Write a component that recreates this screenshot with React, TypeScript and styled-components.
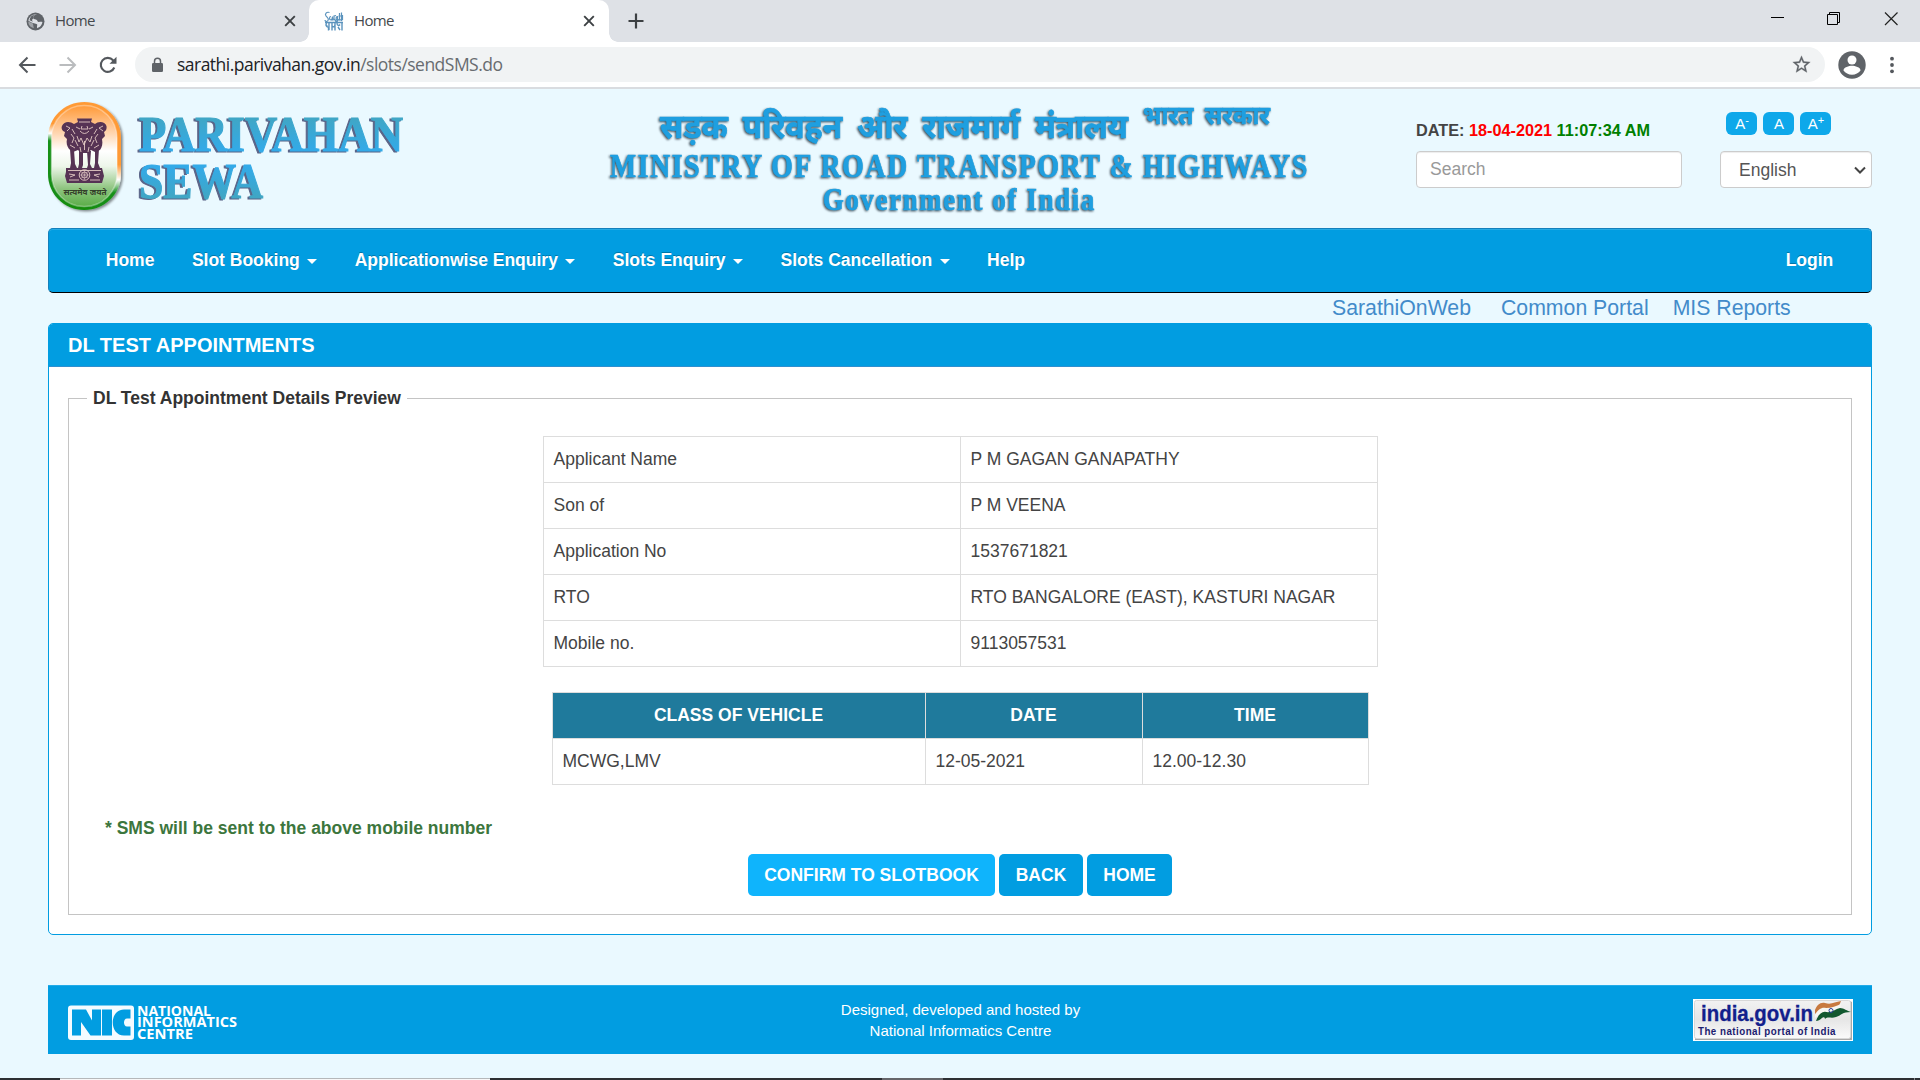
import React from "react";
import styled, { createGlobalStyle } from "styled-components";

const blue = "#019de1";

const GlobalStyle = createGlobalStyle`
  * { box-sizing: border-box; }
  body { margin: 0; background: #eaf9ff; font-family: "Liberation Sans", Arial, sans-serif; color: #444; }
`;

const Screen = styled.div`
  width: 1920px;
  height: 1080px;
  overflow: hidden;
  display: flex;
  flex-direction: column;
`;

/* ---------- browser chrome ---------- */
const TabStrip = styled.div`
  height: 42px;
  flex: none;
  background: #dee1e6;
  display: flex;
  font: 15px "Open Sans", sans-serif;
  letter-spacing: -0.65px;
  color: #45494d;
`;

const Tab = styled.div<{ $active?: boolean }>`
  width: ${(p) => (p.$active ? 300 : 309)}px;
  height: 42px;
  padding: 0 ${(p) => (p.$active ? 14 : 13)}px 0 ${(p) => (p.$active ? 15 : 26)}px;
  display: flex;
  align-items: center;
  background: ${(p) => (p.$active ? "#fff" : "transparent")};
  border-radius: 10px 10px 0 0;
  position: relative;
  &::before, &::after {
    content: "";
    display: ${(p) => (p.$active ? "block" : "none")};
    position: absolute;
    bottom: 0;
    width: 9px;
    height: 9px;
  }
  &::before { left: -9px; background: radial-gradient(circle at 0 0, transparent 8.5px, #fff 9px); }
  &::after { right: -9px; background: radial-gradient(circle at 100% 0, transparent 8.5px, #fff 9px); }
`;

const TabTitle = styled.span`
  flex: 1;
  padding-left: 10px;
  line-height: 20px;
  margin-top: -3px;
`;

const NewTab = styled.div`
  display: flex;
  align-items: center;
  padding-left: 19px;
  flex: 1;
`;

const WindowButtons = styled.div`
  display: flex;
  gap: 43px;
  padding: 12px 21px 0 0;
`;

const Toolbar = styled.div`
  height: 47px;
  flex: none;
  background: #fff;
  border-bottom: 2px solid #d9dce0;
  display: flex;
  align-items: center;
  padding-left: 18px;
`;

const NavIcons = styled.div`
  width: 117px;
  display: flex;
  gap: 20px;
`;

const Omnibox = styled.div`
  width: 1690px;
  height: 35px;
  border-radius: 18px;
  background: #f1f3f4;
  display: flex;
  align-items: center;
  padding: 0 13px 0 16px;
  font: 17.5px "Open Sans", sans-serif;
  letter-spacing: -0.52px;
`;

const Url = styled.span`
  flex: 1;
  padding-left: 13px;
  color: #202124;
  line-height: 24px;
  margin-top: -2px;
  span { color: #686c70; }
`;

const Profile = styled.div`
  display: flex;
  align-items: center;
  gap: 22px;
  padding-left: 13px;
`;

/* ---------- page header ---------- */
const Header = styled.header`
  height: 139px;
  flex: none;
  display: flex;
  padding-left: 40px;
`;

const Ministry = styled.svg`
  margin-left: 180px;
`;

const SearchColumn = styled.div`
  width: 266px;
  margin-left: 96px;
  padding-top: 31px;
`;

const DateLine = styled.div`
  font-size: 16.25px;
  font-weight: bold;
  line-height: 20px;
  margin-bottom: 11px;
  white-space: nowrap;
  color: #444;
`;

const DateValue = styled.span` color: #f00; `;
const TimeValue = styled.span` color: #008000; `;

const Control = styled.div`
  height: 37px;
  border: 1px solid #ccc;
  border-radius: 4px;
  background: #fff;
  box-shadow: inset 0 1px 1px rgba(0, 0, 0, 0.075);
  font-size: 17.5px;
  line-height: 35px;
`;

const SearchBox = styled(Control)`
  padding-left: 13px;
  color: #999;
`;

const LanguageBox = styled(Control)`
  padding: 1px 5px 0 18px;
  line-height: 35px;
  display: flex;
  align-items: center;
  justify-content: space-between;
  color: #555;
`;

const LanguageColumn = styled.div`
  width: 152px;
  margin-left: 38px;
  padding-top: 23px;
`;

const FontButtons = styled.div`
  display: flex;
  gap: 6px;
  padding-left: 6px;
  margin-bottom: 16px;
`;

const FontButton = styled.div`
  width: 31px;
  height: 23px;
  border-radius: 6px;
  background: #0ea8ea;
  color: #fff;
  font-size: 15px;
  line-height: 23px;
  text-align: center;
  padding-left: 1px;
  sup { font-size: 11px; line-height: 0; vertical-align: 5px; }
`;

/* ---------- navigation ---------- */
const NavBar = styled.nav`
  height: 65px;
  flex: none;
  margin: 0 48px;
  padding: 0 19px 0 38px;
  border: 1px solid #1580bb;
  border-bottom-color: #000;
  border-radius: 5px;
  background: ${blue};
  box-shadow: inset 0 1px 0 rgba(255, 255, 255, 0.15);
  display: flex;
  align-items: center;
  font-size: 17.5px;
  font-weight: bold;
  color: #fff;
  text-shadow: 0 -1px 0 rgba(0, 0, 0, 0.25);
`;

const NavItem = styled.span<{ $right?: boolean }>`
  padding: 0 18.75px;
  line-height: 25px;
  margin-left: ${(p) => (p.$right ? "auto" : "0")};
  white-space: nowrap;
`;

const Caret = styled.i`
  display: inline-block;
  margin-left: 7.4px;
  vertical-align: middle;
  border-top: 5px solid #fff;
  border-left: 5px solid transparent;
  border-right: 5px solid transparent;
`;

const LinkRow = styled.div`
  height: 30px;
  flex: none;
  display: flex;
  padding-left: 1332px;
  font-size: 21.25px;
  line-height: 31px;
  color: #428bca;
  white-space: nowrap;
`;

const PortalLink = styled.a<{ $gap: number }>`
  margin-right: ${(p) => p.$gap}px;
`;

/* ---------- panel ---------- */
const Panel = styled.section`
  height: 612px;
  flex: none;
  margin: 0 48px;
  border: 1px solid ${blue};
  border-radius: 5px;
  background: #fff;
  overflow: hidden;
`;

const PanelTitle = styled.h1`
  margin: 0;
  height: 43px;
  padding-left: 19px;
  background: ${blue};
  border-bottom: 1px solid #2f8fcf;
  color: #fff;
  font-size: 20px;
  line-height: 42px;
`;

const Details = styled.fieldset`
  margin: 20px 19px 0;
  padding: 0;
  height: 528px;
  border: 1px solid #c4c4c4;
`;

const Legend = styled.legend`
  margin-left: 18px;
  padding: 0 6px;
  font-size: 17.5px;
  font-weight: bold;
  line-height: 23px;
  color: #333;
`;

const Table = styled.table<{ $width: number; $top: number }>`
  width: ${(p) => p.$width}px;
  margin: ${(p) => p.$top}px auto 0;
  border-collapse: collapse;
  table-layout: fixed;
  font-size: 17.5px;
  color: #444;
`;

const Cell = styled.td`
  height: 46px;
  padding: 0 10px 1px;
  border: 1px solid #ddd;
`;

const HeadCell = styled.th<{ $width: number }>`
  width: ${(p) => p.$width}px;
  height: 46px;
  padding: 0;
  border: 1px solid #ddd;
  background: #1f7a9c;
  color: #fff;
`;

const Notice = styled.p`
  margin: 31px 0 13px 36px;
  font-size: 17.5px;
  font-weight: bold;
  line-height: 25px;
  color: #3c763d;
`;

const Actions = styled.div`
  display: flex;
  justify-content: center;
  gap: 4px;
`;

const Action = styled.button<{ $width: number; $bright?: boolean }>`
  width: ${(p) => p.$width}px;
  height: 42px;
  padding: 0;
  border: 0;
  border-radius: 5px;
  background: ${(p) => (p.$bright ? "#0fb4fc" : blue)};
  color: #fff;
  font: bold 17.5px "Liberation Sans", Arial, sans-serif;
  white-space: nowrap;
`;

/* ---------- footer ---------- */
const Footer = styled.footer`
  height: 69px;
  flex: none;
  margin: 50px 48px 24px;
  padding: 0 19px 0 20px;
  background: ${blue};
  border-top: 1px solid #22abe8;
  display: flex;
  justify-content: space-between;
  color: #fff;
`;

const Credit = styled.div`
  font-size: 15px;
  line-height: 21px;
  padding-top: 13px;
  text-align: center;
`;

const FooterSide = styled.div<{ $right?: boolean; $top: number }>`
  width: 180px;
  padding-top: ${(p) => p.$top}px;
  display: flex;
  justify-content: ${(p) => (p.$right ? "flex-end" : "flex-start")};
  align-items: flex-start;
`;

const Taskbar = styled.div`
  height: 2px;
  flex: none;
  display: flex;
  background: #2d2f33;
`;

const TaskSegment = styled.div<{ $left: number; $width: number; $color: string; $edge?: string }>`
  margin-left: ${(p) => p.$left}px;
  width: ${(p) => p.$width}px;
  background: ${(p) => p.$color};
  border-top: ${(p) => (p.$edge ? `1px solid ${p.$edge}` : "0")};
`;

/* ---------- drawings ---------- */
const CloseIcon = () => (
  <svg width="12" height="12" viewBox="0 0 12 12" stroke="#3c4043" strokeWidth="1.9">
    <path d="M1.200 1.200L10.800 10.800M10.800 1.200L1.200 10.800" />
  </svg>
);

const GlobeIcon = () => (
  <svg width="19" height="19" viewBox="0 0 19 19">
    <circle cx="9.500" cy="9.500" r="9" fill="#5f6368" />
    <path d="M11 2.300C8.600 2.500 7 4 7.200 6c.2 1.400 2.600 1.200 3.600 2 .8.700.4 1.700 1.700 1.900 1.300.1 2.200-.4 3.900.1-.3 2.800-2.500 5.600-5.400 6.200.3-1.300-.3-1.900.2-2.800.3-1-.3-1.500-1.500-1.700C7.500 11.400 4.800 10.400 2.400 8.800 2.800 5 6.500 1.900 11 2.300z" fill="#dee1e6" />
    <path d="M3.500 8.200C4 5 6 3.200 8.500 2.600 7.200 4 7 5.500 7.600 6.500 6 7 5.500 8.500 7 9.800z" fill="#5f6368" />
    <path d="M2.300 9.600l4.600 1.800.9 4.900C4.500 15.600 2.200 13 2.300 9.600z" fill="#dee1e6" opacity="0.500" />
  </svg>
);

const Favicon = () => (
  <svg width="20" height="20" viewBox="0 0 20 20" fill="none" stroke="#5b93bd" strokeWidth="1.200">
    <path d="M5.500 1.500C2.500.5.500 3 2 5s3.500 2.500 2 4.500-3 .5-3-.5M7 5.500c-2 0-2 3.500 0 3.500 1 0 1.500-3.500 1.500-3.500v4M10 9.500V5l2-.5M13 5.500c-1.500 1-1 4 .5 3.500V5M15.500 2v7.500M17.500 1.500v8M14.500 5h4M18.500 4v5" />
    <path d="M1 11.500h18M2.500 11.500c-1 3 0 5 2 4.500v3.500M5 12v7M8 11v8.500M8 15c2 2 3 0 3-2M11 12v7.500M13 12c0 3 2 3 3 1.500M14 16l2 3M18 11v8.500M1.500 13.500l2 2M7 9c3-2 5 0 5 2M13 11c0-3 4-3 5-1" strokeWidth="1.400" />
  </svg>
);

const LANGUAGE = "English";

const Emblem = () => (
  <g>
    <defs>
      <linearGradient id="capsule" x1="0" y1="0" x2="0" y2="1">
        <stop offset="0" stopColor="#ff9a38" />
        <stop offset="0.220" stopColor="#ffc998" />
        <stop offset="0.450" stopColor="#fff" />
        <stop offset="0.600" stopColor="#edf6ea" />
        <stop offset="0.820" stopColor="#8fc580" />
        <stop offset="1" stopColor="#5aad48" />
      </linearGradient>
      <linearGradient id="rimLeft" x1="0" y1="0" x2="0" y2="1">
        <stop offset="0" stopColor="#ff9a36" />
        <stop offset="0.200" stopColor="#ff9a36" />
        <stop offset="0.290" stopColor="#fff" />
        <stop offset="0.360" stopColor="#16911a" />
        <stop offset="1" stopColor="#128c10" />
      </linearGradient>
      <linearGradient id="rimRight" x1="0" y1="0" x2="0" y2="1">
        <stop offset="0" stopColor="#ff9a36" />
        <stop offset="0.580" stopColor="#ff9a36" />
        <stop offset="0.720" stopColor="#fff" />
        <stop offset="0.840" stopColor="#16911a" />
        <stop offset="1" stopColor="#128c10" />
      </linearGradient>
      <filter id="soft" x="-20%" y="-20%" width="150%" height="150%">
        <feDropShadow dx="1.800" dy="1.500" stdDeviation="1.200" floodColor="#000" floodOpacity="0.450" />
      </filter>
    </defs>
    <g filter="url(#soft)">
      <path d="M84.500 102C64 102 48 118 48 138v36c0 20 16 36 36.500 36z" fill="url(#rimLeft)" />
      <path d="M84 102c20.500 0 37 16 37 36v36c0 20-16.500 36-37 36z" fill="url(#rimRight)" />
    </g>
    <rect x="51.500" y="105.500" width="65.500" height="101" rx="32.500" fill="url(#capsule)" stroke="#fff" strokeOpacity="0.350" strokeWidth="1.500" />
    <g fill="#563354">
      <path d="M77 118.500h15l-1 3.500 4 2c3-3 10-3 11.500 2 .5 3-.5 5-2.500 6l1 4-3 3c1 5 0 8-2 11l-5 2-4-2-3 3h-7l-3-3-5 2-4-3c-2-3-3-6-2-10l-3-3 1-4c-3-1-4-4-3-6 2-5 8-5 12-2l4-2z" />
      <path d="M70 149l4 1 1 14 2 4h-7l1-5zM79 151h4v14l-1 3h-4l1-4zM87 151h4l-1 13 2 4h-5l1-3zM95 150l4-1-1 14 2 5h-6l1-5z" />
      <path d="M66 168h36l1 4 1 4-2 7H67l-2-7 1-4z" />
    </g>
    <g stroke="#e3c9c4" fill="none" strokeWidth="0.900">
      <path d="M79 122h11M76 127l4 2m13-2l-4 2M80 131q4.500 5 9 0M82 126l-1 3h7l-1-3M66 126l4 2-3 3M103 126l-4 2 4 3M71 134l3 4-2 5M98 134l-3 4 2 5M77 136l2 6 2-4 3 7 3-7 3 4 2-6M70 145l5 3M99 145l-5 3M80 147l1 5M89 147l-1 5M84.500 141v9M72 129l3 5M97 129l-3 5M75 140l3 6M94 140l-3 6" />
      <path d="M68 170.500h33M69 180h10M90 180h10M69 174l6 1-5 2M100 174l-6 1 5 2" />
      <circle cx="84.500" cy="175" r="5.300" />
      <circle cx="84.500" cy="175" r="3" />
      <path d="M79.500 175h10M84.500 170v10M81 171.500l7 7M88 171.500l-7 7" strokeWidth="0.500" />
    </g>
    <text x="63.500" y="195" textLength="43" lengthAdjust="spacingAndGlyphs" fontFamily='"Noto Sans", sans-serif' fontSize="8.500" fontWeight="bold" fill="#34402a">सत्यमेव जयते</text>
  </g>
);

const Caption = ({ children, fill, shadow }: { children: React.ReactNode; fill: string; shadow: string }) => (
  <g fill={fill} stroke={fill} strokeWidth="0.700" style={{ filter: shadow }}>{children}</g>
);

const serif = '"Liberation Serif", "Times New Roman", serif';
const hindi = '"Noto Sans", "Noto Sans Devanagari", sans-serif';

const PORTAL_MENU: [string, boolean][] = [
  ["Home", false],
  ["Slot Booking", true],
  ["Applicationwise Enquiry", true],
  ["Slots Enquiry", true],
  ["Slots Cancellation", true],
  ["Help", false],
];

const APPLICANT: [string, string][] = [
  ["Applicant Name", "P M GAGAN GANAPATHY"],
  ["Son of", "P M VEENA"],
  ["Application No", "1537671821"],
  ["RTO", "RTO BANGALORE (EAST), KASTURI NAGAR"],
  ["Mobile no.", "9113057531"],
];

export default function App() {
  return (
    <Screen>
      <GlobalStyle />
      <TabStrip>
        <Tab>
          <GlobeIcon />
          <TabTitle>Home</TabTitle>
          <CloseIcon />
        </Tab>
        <Tab $active>
          <Favicon />
          <TabTitle>Home</TabTitle>
          <CloseIcon />
        </Tab>
        <NewTab>
          <svg width="16" height="16" viewBox="0 0 16 16" stroke="#3c4043" strokeWidth="2.200">
            <path d="M8 .5v15M.5 8h15" />
          </svg>
        </NewTab>
        <WindowButtons>
          <svg width="13" height="14" viewBox="0 0 13 14"><path d="M0 5.500h13" stroke="#000" /></svg>
          <svg width="14" height="14" viewBox="0 0 14 14" fill="none" stroke="#000">
            <path d="M.5 2.500h10v10H.500zM2.500 2.500v-2h10v10h-2" />
          </svg>
          <svg width="15" height="14" viewBox="0 0 15 14"><path d="M1 .5l12.500 12.500M13.500.5L1 13" stroke="#222" strokeWidth="1.200" /></svg>
        </WindowButtons>
      </TabStrip>
      <Toolbar>
        <NavIcons>
          <svg width="20" height="20" viewBox="0 0 20 20" fill="none" stroke="#54585d" strokeWidth="2">
            <path d="M17.500 10H2.500M9.500 2.500L2 10l7.500 7.500" />
          </svg>
          <svg width="20" height="20" viewBox="0 0 20 20" fill="none" stroke="#babcbe" strokeWidth="2">
            <path d="M1.500 10H16.500M9.500 2.500L17 10l-7.500 7.500" />
          </svg>
          <svg width="20" height="20" viewBox="0 0 20 20" fill="none" stroke="#54585d" strokeWidth="2.100">
            <path d="M16.300 12.500a7 7 0 1 1-1.200-7.200L17 7.200" />
            <path d="M18.500 1.800v7h-7z" fill="#54585d" stroke="none" />
          </svg>
        </NavIcons>
        <Omnibox>
          <svg width="13" height="16" viewBox="0 0 13 16">
            <rect x="1" y="6" width="11" height="9" rx="1.300" fill="#5f6368" />
            <path d="M3.500 6.500V4.200a3 3 0 0 1 6 0v2.300" fill="none" stroke="#5f6368" strokeWidth="1.500" />
          </svg>
          <Url>sarathi.parivahan.gov.in<span>/slots/sendSMS.do</span></Url>
          <svg width="21" height="21" viewBox="0 0 24 24" fill="#5f6368" stroke="#5f6368" strokeWidth="0.300">
            <path d="M22 9.240l-7.190-.62L12 2 9.190 8.630 2 9.240l5.460 4.730L5.820 21 12 17.270 18.180 21l-1.630-7.030L22 9.240zM12 15.400l-3.760 2.270 1-4.280-3.320-2.880 4.380-.38L12 6.100l1.710 4.040 4.380.38-3.320 2.880 1 4.280L12 15.400z" />
          </svg>
        </Omnibox>
        <Profile>
          <svg width="28" height="28" viewBox="0 0 28 28">
            <circle cx="14" cy="14" r="13.700" fill="#5f6368" />
            <circle cx="14" cy="9" r="4.500" fill="#fff" />
            <path d="M5.500 19.500c0-3.200 5.500-4.700 8.500-4.700s8.500 1.500 8.500 4.700c-1.800 2.700-5 4.200-8.500 4.200s-6.700-1.500-8.500-4.200z" fill="#fff" />
          </svg>
          <svg width="8" height="20" viewBox="0 0 8 20" fill="#54585d">
            <circle cx="4" cy="3.700" r="1.900" /><circle cx="4" cy="10" r="1.900" /><circle cx="4" cy="16.300" r="1.900" />
          </svg>
        </Profile>
      </Toolbar>

      <Header>
        <svg width="380" height="139" viewBox="40 89 380 139">
          <defs>
            <linearGradient id="lineOne" x1="0" y1="0" x2="0" y2="1">
              <stop offset="0.200" stopColor="#40a6c4" />
              <stop offset="0.800" stopColor="#33aae8" />
            </linearGradient>
            <linearGradient id="lineTwo" x1="0" y1="0" x2="0" y2="1">
              <stop offset="0.250" stopColor="#33aae8" />
              <stop offset="0.800" stopColor="#40a6c4" />
            </linearGradient>
          </defs>
          <Emblem />
          <Caption fill="url(#lineOne)" shadow="drop-shadow(-1.500px 1.200px 0.700px #5a6488)">
            <text x="139" y="150.500" textLength="264" lengthAdjust="spacingAndGlyphs" fontFamily={serif} fontWeight="bold" fontSize="51" strokeWidth="1.200">PARIVAHAN</text>
          </Caption>
          <Caption fill="url(#lineTwo)" shadow="drop-shadow(-1.500px 1.200px 0.700px #5a6488)">
            <text x="139" y="198" textLength="124" lengthAdjust="spacingAndGlyphs" fontFamily={serif} fontWeight="bold" fontSize="51" strokeWidth="1.200">SEWA</text>
          </Caption>
        </svg>
        <Ministry width="720" height="139" viewBox="600 89 720 139">
          <Caption fill="#1f9fe0" shadow="drop-shadow(-0.800px 1.500px 0.800px #3a4a55)">
            <text x="660" y="138" textLength="468" lengthAdjust="spacingAndGlyphs" fontFamily={hindi} fontWeight="bold" fontSize="33" wordSpacing="7">सड़क परिवहन और राजमार्ग मंत्रालय</text>
            <text x="1143" y="124" textLength="127" lengthAdjust="spacingAndGlyphs" fontFamily={hindi} fontWeight="bold" fontSize="26" wordSpacing="6">भारत सरकार</text>
            <text x="610" y="177" textLength="699" lengthAdjust="spacingAndGlyphs" fontFamily={serif} fontWeight="bold" fontSize="33" letterSpacing="2">MINISTRY OF ROAD TRANSPORT &amp; HIGHWAYS</text>
            <text x="823" y="209.500" textLength="273" lengthAdjust="spacingAndGlyphs" fontFamily={serif} fontWeight="bold" fontSize="31" letterSpacing="2">Government of India</text>
          </Caption>
        </Ministry>
        <SearchColumn>
          <DateLine>DATE: <DateValue>18-04-2021</DateValue> <TimeValue>11:07:34 AM</TimeValue></DateLine>
          <SearchBox>Search</SearchBox>
        </SearchColumn>
        <LanguageColumn>
          <FontButtons>
            <FontButton>A<sup>-</sup></FontButton>
            <FontButton>A</FontButton>
            <FontButton>A<sup>+</sup></FontButton>
          </FontButtons>
          <LanguageBox>
            {LANGUAGE}
            <svg width="12" height="9" viewBox="0 0 12 9" fill="none" stroke="#444" strokeWidth="2"><path d="M1 1.500l5 5 5-5" /></svg>
          </LanguageBox>
        </LanguageColumn>
      </Header>

      <NavBar>
        {PORTAL_MENU.map(([label, hasMenu]) => (
          <NavItem key={label}>{label}{hasMenu && <Caret />}</NavItem>
        ))}
        <NavItem $right>Login</NavItem>
      </NavBar>
      <LinkRow>
        <PortalLink $gap={30}>SarathiOnWeb</PortalLink>
        <PortalLink $gap={24}>Common Portal</PortalLink>
        <PortalLink $gap={0}>MIS Reports</PortalLink>
      </LinkRow>

      <Panel>
        <PanelTitle>DL TEST APPOINTMENTS</PanelTitle>
        <Details>
          <Legend>DL Test Appointment Details Preview</Legend>
          <Table $width={835} $top={26}>
            <tbody>
              {APPLICANT.map(([label, value]) => (
                <tr key={label}><Cell>{label}</Cell><Cell>{value}</Cell></tr>
              ))}
            </tbody>
          </Table>
          <Table $width={817} $top={25}>
            <thead>
              <tr>
                <HeadCell $width={373}>CLASS OF VEHICLE</HeadCell>
                <HeadCell $width={217}>DATE</HeadCell>
                <HeadCell $width={226}>TIME</HeadCell>
              </tr>
            </thead>
            <tbody>
              <tr><Cell>MCWG,LMV</Cell><Cell>12-05-2021</Cell><Cell>12.00-12.30</Cell></tr>
            </tbody>
          </Table>
          <Notice>* SMS will be sent to the above mobile number</Notice>
          <Actions>
            <Action $width={247} $bright>CONFIRM TO SLOTBOOK</Action>
            <Action $width={84}>BACK</Action>
            <Action $width={85}>HOME</Action>
          </Actions>
        </Details>
      </Panel>

      <Footer>
        <FooterSide $top={18}>
          <svg width="176" height="38" viewBox="0 -1 176 38">
            <rect x="0" y="0.500" width="66" height="34.500" rx="3" fill="#f4fbff" />
            <path d="M4 4.500h14l6 11v-11h9v26H22.500L13 17v13.500H4zM34 4.500h10v26H34zM62.500 4.500v9H59c-4 0-4 8 0 8h3.500v9H56C41 30.500 41 4.500 56 4.500z" fill={blue} />
            <g fill="#fff" fontFamily='"Open Sans", sans-serif' fontWeight="bold" fontSize="13.500">
              <text x="69" y="10.500" textLength="74" lengthAdjust="spacingAndGlyphs">NATIONAL</text>
              <text x="69" y="22.300" textLength="100" lengthAdjust="spacingAndGlyphs">INFORMATICS</text>
              <text x="69" y="34" textLength="56" lengthAdjust="spacingAndGlyphs">CENTRE</text>
            </g>
          </svg>
        </FooterSide>
        <Credit>
          Designed, developed and hosted by<br />National Informatics Centre
        </Credit>
        <FooterSide $right $top={13}>
          <svg width="160" height="42" viewBox="0 0 160 42">
            <defs>
              <linearGradient id="plate" x1="0" y1="0" x2="0" y2="1">
                <stop offset="0" stopColor="#f2f2f2" />
                <stop offset="0.500" stopColor="#e6e6e6" />
                <stop offset="1" stopColor="#fafafa" />
              </linearGradient>
            </defs>
            <rect width="160" height="42" fill="#fff" />
            <path d="M2 41h157V3l-2-1v37H2z" fill="#a8a8a8" />
            <rect x="1.500" y="1.500" width="156" height="38" rx="2" fill="url(#plate)" stroke="#d8d8d8" />
            <text x="8" y="22" textLength="112" lengthAdjust="spacingAndGlyphs" fontFamily='"Liberation Sans", Arial, sans-serif' fontWeight="bold" fontSize="21.500" fill="#12208c" stroke="#12208c" strokeWidth="0.300">india.gov.in</text>
            <text x="5" y="36" textLength="138" lengthAdjust="spacingAndGlyphs" fontFamily='"Liberation Sans", Arial, sans-serif' fontWeight="bold" fontSize="10.300" letterSpacing="0.500" fill="#1c1c70">The national portal of India</text>
            <path d="M122 11c2-5 5-8 10-7 6 2 10-1 16-2l-2 5c-5 1-8 4-12 3-4 0-8 1-12 5z" fill="#c87a40" />
            <path d="M122 16c3-6 7-8 11-7 6 0 10-2 15-4l-1 6c-5 0-8 4-13 4-5-1-9 1-12 4z" fill="#f7f7f2" />
            <path d="M123 22c2-6 6-10 10-9 6 1 9-3 14-4 4 0 7 3 11 4-9 0-9 3-15 5-5 2-8-1-11 2 0-2-2-2-3-1-2 2-4 3-6 3z" fill="#12582f" />
            <circle cx="138" cy="11.500" r="2" fill="none" stroke="#2a3f9a" />
          </svg>
        </FooterSide>
      </Footer>

      <Taskbar>
        <TaskSegment $left={60} $width={430} $color="#f7f7f7" $edge="#b5b8ba" />
        <TaskSegment $left={392} $width={61} $color="#66666a" />
        <TaskSegment $left={971} $width={1} $color="#85878a" />
      </Taskbar>
    </Screen>
  );
}
